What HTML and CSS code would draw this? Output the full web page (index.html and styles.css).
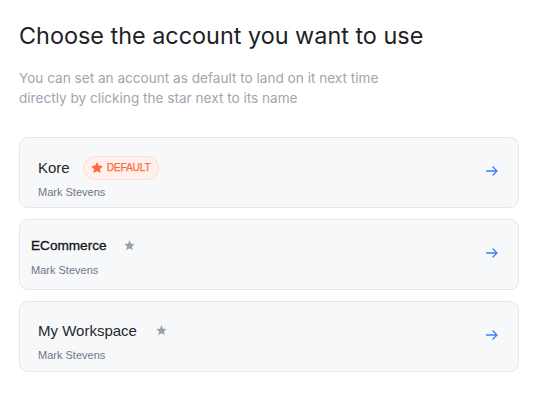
FILE: index.html
```html
<!DOCTYPE html>
<html>
<head>
<meta charset="utf-8">
<link rel="stylesheet" href="styles.css">
</head>
<body>
<div class="page">
  <h1 class="title">Choose the account you want to use</h1>
  <p class="subtitle">You can set an account as default to land on it next time<br>directly by clicking the star next to its name</p>
  <div class="list">
    <div class="card card-default">
      <div class="info">
        <div class="name-row">
          <span class="name">Kore</span>
          <span class="badge">
            <svg class="badge-star" viewBox="0 0 24 24" width="14" height="14"><path d="M12 1.5l3.1 6.4 7 .9-5.1 4.9 1.3 7L12 17.3l-6.3 3.4 1.3-7-5.1-4.9 7-.9z" fill="#ff6a3d"/></svg>
            DEFAULT
          </span>
        </div>
        <div class="owner">Mark Stevens</div>
      </div>
      <svg class="arrow" viewBox="0 0 14 12" width="14" height="12"><path d="M1 6h11M7.5 1.5L12 6l-4.5 4.5" fill="none" stroke="#3b82f6" stroke-width="1.3"/></svg>
    </div>
    <div class="card card-tight">
      <div class="info">
        <div class="name-row">
          <span class="name name-strong">ECommerce</span>
          <svg class="star star-tight" viewBox="0 0 24 24" width="13" height="13"><path d="M12 2.5l2.9 6.1 6.6.8-4.9 4.6 1.3 6.6L12 17.3l-5.9 3.3 1.3-6.6-4.9-4.6 6.6-.8z" fill="#9ca0a8"/></svg>
        </div>
        <div class="owner">Mark Stevens</div>
      </div>
      <svg class="arrow" viewBox="0 0 14 12" width="14" height="12"><path d="M1 6h11M7.5 1.5L12 6l-4.5 4.5" fill="none" stroke="#3b82f6" stroke-width="1.3"/></svg>
    </div>
    <div class="card">
      <div class="info">
        <div class="name-row">
          <span class="name">My Workspace</span>
          <svg class="star" viewBox="0 0 24 24" width="13" height="13"><path d="M12 2.5l2.9 6.1 6.6.8-4.9 4.6 1.3 6.6L12 17.3l-5.9 3.3 1.3-6.6-4.9-4.6 6.6-.8z" fill="#9ca0a8"/></svg>
        </div>
        <div class="owner">Mark Stevens</div>
      </div>
      <svg class="arrow" viewBox="0 0 14 12" width="14" height="12"><path d="M1 6h11M7.5 1.5L12 6l-4.5 4.5" fill="none" stroke="#3b82f6" stroke-width="1.3"/></svg>
    </div>
  </div>
</div>
</body>
</html>
```
FILE: styles.css
```css
html, body {
  margin: 0;
  padding: 0;
  background: #ffffff;
}
.page {
  padding: 20px 22px 0 19px;
  font-family: Inter, "Liberation Sans", sans-serif;
}
.title {
  margin: 0;
  font-size: 23.4px;
  font-weight: 400;
  line-height: 32px;
  color: #1f2125;
}
.subtitle {
  margin: 16px 0 0 0;
  font-size: 13.6px;
  line-height: 20px;
  color: #a1a5ad;
}
.list {
  margin-top: 29px;
  display: flex;
  flex-direction: column;
  gap: 11px;
}
.card {
  height: 71px;
  box-sizing: border-box;
  border: 1px solid #e4e6ea;
  border-radius: 9px;
  background: #f7f8fa;
  display: flex;
  align-items: center;
  justify-content: space-between;
  padding: 0 19px 0 18px;
}
.card-tight {
  padding-left: 11px;
}
.info {
  display: flex;
  flex-direction: column;
  font-family: "Liberation Sans", Arial, sans-serif;
  padding-top: 6px;
}
.card-default .info {
  padding-top: 8px;
}
.card-tight .info {
  padding-top: 0;
}
.name-row {
  display: flex;
  align-items: center;
  height: 24px;
}
.name {
  font-size: 15px;
  color: #26282c;
}
.name-strong {
  font-size: 13.6px;
  color: #111318;
  -webkit-text-stroke: 0.3px #111318;
}
.badge {
  margin-left: 13px;
  display: inline-flex;
  align-items: center;
  gap: 3px;
  height: 24px;
  box-sizing: border-box;
  padding: 0 7px 0 6px;
  border: 1px solid #ffdcd0;
  border-radius: 12px;
  background: #fff0eb;
  color: #ff6a3d;
  font-size: 10.3px;
  letter-spacing: -0.25px;
  -webkit-text-stroke: 0.25px #ff6a3d;
}
.star {
  margin-left: 18px;
}
.star-tight {
  margin-left: 16px;
}
.owner {
  margin-top: 6px;
  font-size: 11px;
  color: #6f7686;
}
.arrow {
  display: block;
  margin-top: -3px;
}
```
